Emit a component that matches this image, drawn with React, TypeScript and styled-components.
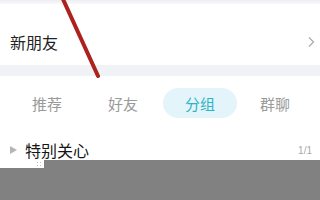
import React from 'react';
import styled, { createGlobalStyle } from 'styled-components';

const GlobalStyle = createGlobalStyle`
  html, body {
    margin: 0;
    padding: 0;
    background: #ffffff;
  }
  body {
    font-family: "Noto Sans CJK SC", "Noto Sans", sans-serif;
  }
`;

const Screen = styled.div`
  position: relative;
  width: 320px;
  height: 200px;
  overflow: hidden;
  background: #ffffff;
`;

const TopEdge = styled.div`
  height: 4px;
  background: linear-gradient(#eceef2, #f8f9fa);
`;

const EntryRow = styled.div`
  display: flex;
  align-items: center;
  justify-content: space-between;
  padding: 27px 4px 12px 10px;
  height: 22px;
`;

const EntryLabel = styled.span`
  font-size: 16px;
  line-height: 22px;
  color: #222222;
`;

const Separator = styled.div`
  height: 11px;
  background: #f1f2f5;
`;

const Tabs = styled.div`
  display: grid;
  grid-template-columns: repeat(4, 76px);
  padding: 12px 0 0 9px;
  height: 40px;
`;

const Tab = styled.div<{ $active?: boolean }>`
  display: flex;
  align-items: center;
  justify-content: center;
  height: 30px;
  margin-left: ${({ $active }) => ($active ? '2px' : '0')};
  border-radius: 15px;
  font-size: 15px;
  color: ${({ $active }) => ($active ? '#2fb3c4' : '#9a9a9a')};
  background: ${({ $active }) => ($active ? '#e3f5fa' : 'transparent')};
`;

const GroupRow = styled.div`
  display: flex;
  align-items: center;
  padding: 10px 8px 0 10px;
  height: 24px;
`;

const Caret = styled.span`
  width: 0;
  height: 0;
  border-top: 4px solid transparent;
  border-bottom: 4px solid transparent;
  border-left: 7px solid #b5b5b5;
  margin-right: 8px;
`;

const GroupName = styled.span`
  font-size: 16px;
  line-height: 20px;
  color: #151515;
  flex: 1;
`;

const GroupCount = styled.span`
  font-size: 10px;
  color: #a8a8a8;
  font-family: "Liberation Sans", sans-serif;
`;

const Slash = styled.svg`
  position: absolute;
  left: 0;
  top: 0;
  pointer-events: none;
`;

const CoverWide = styled.div`
  position: absolute;
  left: 44px;
  right: 0;
  top: 160px;
  bottom: 0;
  background: #818181;
`;

const CoverNarrow = styled.div`
  position: absolute;
  left: 0;
  width: 44px;
  top: 168px;
  bottom: 0;
  background: #818181;
`;

const Dots = styled.div`
  position: absolute;
  left: 36px;
  top: 161px;
  width: 6px;
  height: 7px;
  background-image: radial-gradient(#bdbdbd 0.8px, transparent 1px);
  background-size: 3px 3px;
`;

const Chevron = () => (
  <svg width="10" height="12" viewBox="0 0 10 12">
    <path d="M3 1.5 L7.5 6 L3 10.5" fill="none" stroke="#b0b0b0" strokeWidth="1.4" />
  </svg>
);

export default function App() {
  const tabs = ['推荐', '好友', '分组', '群聊'];
  return (
    <>
      <GlobalStyle />
      <Screen>
        <TopEdge />
        <EntryRow>
          <EntryLabel>新朋友</EntryLabel>
          <Chevron />
        </EntryRow>
        <Separator />
        <Tabs>
          {tabs.map((t) => (
            <Tab key={t} $active={t === '分组'}>
              {t}
            </Tab>
          ))}
        </Tabs>
        <GroupRow>
          <Caret />
          <GroupName>特别关心</GroupName>
          <GroupCount>1/1</GroupCount>
        </GroupRow>
        <Dots />
        <CoverWide />
        <CoverNarrow />
        <Slash width="320" height="200">
          <line x1="62" y1="-3" x2="98" y2="76" stroke="#ad221e" strokeWidth="4" strokeLinecap="round" />
        </Slash>
      </Screen>
    </>
  );
}
